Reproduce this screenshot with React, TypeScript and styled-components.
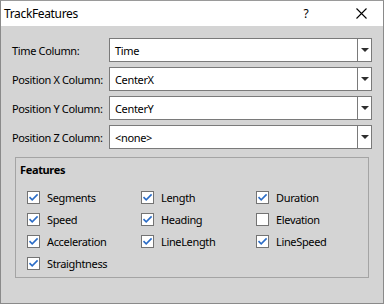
import React from 'react'
import styled, { createGlobalStyle } from 'styled-components'

const GlobalStyle = createGlobalStyle`
  html, body {
    margin: 0;
    padding: 0;
    background: #d4d4d4;
  }
  * {
    box-sizing: border-box;
  }
`

const Window = styled.div`
  width: 384px;
  height: 304px;
  border: 1px solid #8a8a8a;
  border-top-color: #9a9a9a;
  background: #d4d4d4;
  display: flex;
  flex-direction: column;
  font-family: 'Noto Sans', 'Liberation Sans', sans-serif;
  font-size: 11px;
  letter-spacing: -0.35px;
  color: #000;
`

const TitleBar = styled.div`
  height: 25px;
  background: #ffffff;
  display: flex;
  align-items: center;
  padding-left: 3px;
  font-size: 12px;
`

const Title = styled.div`
  flex: 1;
`

const HelpButton = styled.div`
  width: 14px;
  margin-right: 36px;
  font-size: 12px;
  text-align: center;
`

const CloseButton = styled.div`
  width: 24px;
  margin-right: 10px;
  display: flex;
  justify-content: center;
  align-items: center;
`

const Body = styled.div`
  flex: 1;
  padding: 12px 11px 0 11px;
  display: flex;
  flex-direction: column;
`

const Form = styled.div`
  display: grid;
  grid-template-columns: 97px 1fr;
  row-gap: 5px;
  align-items: center;
`

const Label = styled.div`
  white-space: nowrap;
`

const Combo = styled.div`
  height: 24px;
  background: #ffffff;
  border: 1px solid #7a7a7a;
  display: flex;
  align-items: stretch;
`

const ComboValue = styled.div`
  flex: 1;
  display: flex;
  align-items: center;
  padding-left: 5px;
`

const ComboButton = styled.div`
  width: 14px;
  border-left: 1px solid #7a7a7a;
  display: flex;
  align-items: center;
  justify-content: center;
`

const Arrow = styled.div`
  width: 0;
  height: 0;
  border-left: 4px solid transparent;
  border-right: 4px solid transparent;
  border-top: 4px solid #2e2e2e;
`

const Group = styled.div`
  margin: 8px 3px 0 3px;
  height: 121px;
  border: 1px solid #a4a4a4;
  padding: 4px 0 0 4px;
`

const GroupTitle = styled.div`
  font-weight: bold;
  height: 16px;
  line-height: 16px;
`

const Grid = styled.div`
  margin-top: 8px;
  padding-left: 7px;
  display: grid;
  grid-template-columns: 114px 115px 1fr;
  grid-auto-rows: 22px;
`

const Item = styled.label`
  display: flex;
  align-items: center;
  gap: 7px;
`

const Box = styled.span`
  width: 13px;
  height: 13px;
  border: 1px solid #737373;
  background: #ffffff;
  display: flex;
  align-items: center;
  justify-content: center;
`

const fields = [
  { label: 'Time Column:', value: 'Time' },
  { label: 'Position X Column:', value: 'CenterX' },
  { label: 'Position Y Column:', value: 'CenterY' },
  { label: 'Position Z Column:', value: '<none>' },
]

const features = [
  { name: 'Segments', checked: true },
  { name: 'Length', checked: true },
  { name: 'Duration', checked: true },
  { name: 'Speed', checked: true },
  { name: 'Heading', checked: true },
  { name: 'Elevation', checked: false },
  { name: 'Acceleration', checked: true },
  { name: 'LineLength', checked: true },
  { name: 'LineSpeed', checked: true },
  { name: 'Straightness', checked: true },
]

const Check = () => (
  <svg width="11" height="11" viewBox="0 0 11 11">
    <path d="M1.5 5.2 L4.2 7.8 L9.6 2.4" fill="none" stroke="#2b6cc6" strokeWidth="1.6" />
  </svg>
)

const App = () => (
  <>
    <GlobalStyle />
    <Window>
      <TitleBar>
        <Title>TrackFeatures</Title>
        <HelpButton>?</HelpButton>
        <CloseButton>
          <svg width="11" height="11" viewBox="0 0 11 11">
            <path d="M0.5 0.5 L10.5 10.5 M10.5 0.5 L0.5 10.5" stroke="#000" strokeWidth="1.1" />
          </svg>
        </CloseButton>
      </TitleBar>
      <Body>
        <Form>
          {fields.map(f => (
            <React.Fragment key={f.label}>
              <Label>{f.label}</Label>
              <Combo>
                <ComboValue>{f.value}</ComboValue>
                <ComboButton>
                  <Arrow />
                </ComboButton>
              </Combo>
            </React.Fragment>
          ))}
        </Form>
        <Group>
          <GroupTitle>Features</GroupTitle>
          <Grid>
            {features.map(f => (
              <Item key={f.name}>
                <Box>{f.checked && <Check />}</Box>
                {f.name}
              </Item>
            ))}
          </Grid>
        </Group>
      </Body>
    </Window>
  </>
)

export default App
